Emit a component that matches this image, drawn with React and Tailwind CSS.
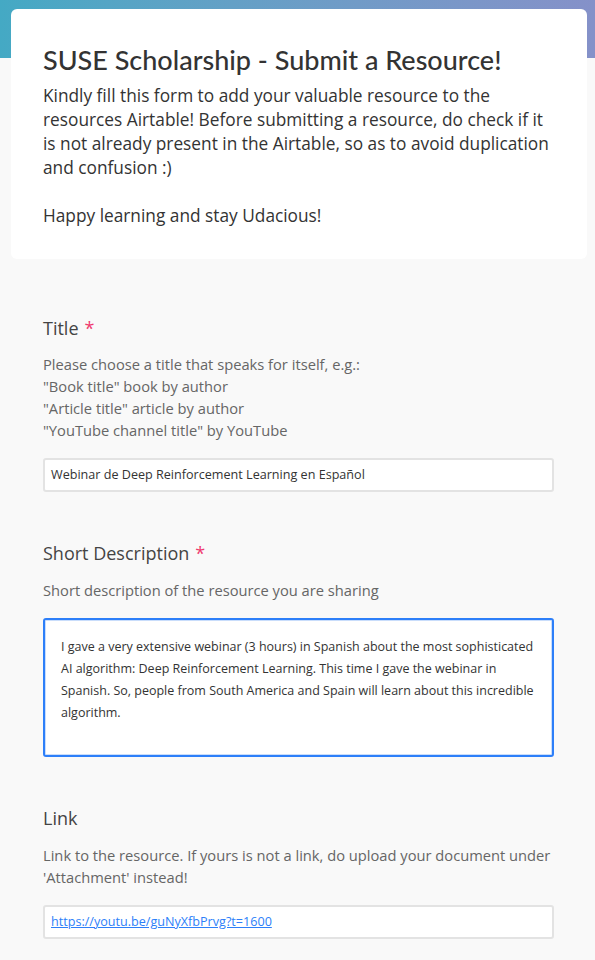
import React from 'react';

const body = { fontFamily: '"Open Sans", "Noto Sans", sans-serif' };
const heading = { fontFamily: 'Lato, "Open Sans", sans-serif' };

const Field = ({ label, required, children }) => (
    <div className="mb-[49px]">
        <div className="text-[18px] leading-[24px] text-[#444]">
            {label}
            {required && <span className="ml-[6px] text-[#ef3a6f]">*</span>}
        </div>
        {children}
    </div>
);

export default function App() {
    return (
        <div className="min-h-[960px] bg-[#f9f9f9] text-[#333]" style={body}>
            {/* header band */}
            <div className="h-[58px] bg-linear-to-r from-[#44a9c4] to-[#8591c9]" />

            <div className="ml-[11px] mr-[8px] -mt-[49px] rounded-md bg-white pl-[32px] pr-[29px] pt-[34px] pb-[31px]">
                <h1 className="text-[27px] leading-[34px] font-medium text-[#333]" style={heading}>
                    SUSE Scholarship - Submit a Resource!
                </h1>
                <p className="mt-[7px] text-[17.3px] leading-[24px]">
                    Kindly fill this form to add your valuable resource to the resources Airtable! Before submitting a resource, do check if it is not already present in the Airtable, so as to avoid duplication and confusion :)
                </p>
                <p className="mt-[24px] text-[17.3px] leading-[24px]">Happy learning and stay Udacious!</p>
            </div>

            <div className="px-[43px] pt-[57px] pr-[41px]">
                <Field label="Title" required>
                    <div className="mt-[13px] text-[14.7px] leading-[22px] text-[#666]">
                        <p>Please choose a title that speaks for itself, e.g.:</p>
                        <p>"Book title" book by author</p>
                        <p>"Article title" article by author</p>
                        <p>"YouTube channel title" by YouTube</p>
                    </div>
                    <div className="mt-[17px] h-[34px] rounded-[3px] border-2 border-[#e3e3e3] bg-white px-[6px] text-[12.6px] leading-[30px] text-[#333]">
                        Webinar de Deep Reinforcement Learning en Español
                    </div>
                </Field>

                <Field label="Short Description" required>
                    <p className="mt-[14px] text-[14.7px] leading-[22px] text-[#666]">
                        Short description of the resource you are sharing
                    </p>
                    <div className="mt-[17px] h-[139px] rounded-[3px] border-2 border-[#2d7ff9] bg-white pl-[16px] pr-[10px] pt-[16px] text-[12.5px] leading-[22px] text-[#333] shadow-[inset_0_0_0_1px_#c9ddfb]">
                        I gave a very extensive webinar (3 hours) in Spanish about the most sophisticated AI algorithm: Deep Reinforcement Learning. This time I gave the webinar in Spanish. So, people from South America and Spain will learn about this incredible algorithm.
                    </div>
                </Field>

                <Field label="Link">
                    <p className="mt-[14px] text-[14.7px] leading-[22px] text-[#666]">
                        Link to the resource. If yours is not a link, do upload your document under 'Attachment' instead!
                    </p>
                    <div className="mt-[17px] h-[34px] rounded-[3px] border-2 border-[#e3e3e3] bg-white px-[6px] text-[12.6px] leading-[30px]">
                        <a href="#" className="text-[#2d7ff9] underline">https://youtu.be/guNyXfbPrvg?t=1600</a>
                    </div>
                </Field>
            </div>
        </div>
    );
}
